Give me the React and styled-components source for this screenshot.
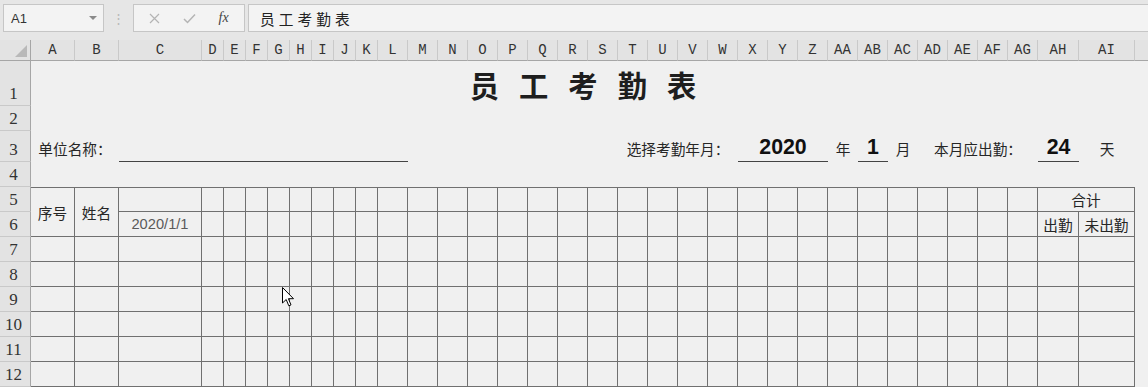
import React from "react"
import styled, { createGlobalStyle, css } from "styled-components"

const GlobalStyle = createGlobalStyle`
  body {
    margin: 0;
    background: #f0f0f0;
    overflow: hidden;
  }
`

const LETTERS_30 = "LMNOPQRSTUVWXYZ".split("").concat(["AA", "AB", "AC", "AD", "AE", "AF", "AG"])

const COLS = [
  ["A", 44], ["B", 44], ["C", 83],
  ...["D", "E", "F", "G", "H", "I", "J", "K"].map(l => [l, 22]),
  ...LETTERS_30.map(l => [l, 30]),
  ["AH", 41], ["AI", 56], ["", 60],
]

const ROWS = [45, 25, 31, 25, 25, 25, 25, 25, 25, 25, 25, 25]

const LINE = "#707070"

const Page = styled.div`
  position: relative;
  width: 1148px;
  height: 387px;
  overflow: hidden;
  font-family: "Liberation Sans", "Noto Sans CJK SC", sans-serif;
`

const Toolbar = styled.div`
  display: flex;
  align-items: flex-start;
  height: 40px;
  box-sizing: border-box;
  padding: 4px 0 0 3px;
  background: #e6e6e6;
`

const NameBox = styled.div`
  display: flex;
  align-items: center;
  justify-content: space-between;
  box-sizing: border-box;
  width: 101px;
  height: 28px;
  padding: 0 6px 0 7px;
  background: #f3f3f3;
  border: 1px solid #c6c6c6;
  font-size: 13px;
  color: #333;
`

const Caret = styled.span`
  width: 0;
  height: 0;
  border-left: 4px solid transparent;
  border-right: 4px solid transparent;
  border-top: 4px solid #8a8a8a;
`

const Dots = styled.div`
  width: 29px;
  height: 28px;
  display: flex;
  align-items: center;
  justify-content: center;
  color: #b8b8b8;
  font-size: 13px;
`

const FxBox = styled.div`
  display: flex;
  align-items: center;
  justify-content: space-around;
  box-sizing: border-box;
  width: 112px;
  height: 28px;
  padding: 0 4px;
  background: #f3f3f3;
  border: 1px solid #c6c6c6;
`

const FxText = styled.span`
  font-family: "Liberation Serif", serif;
  font-style: italic;
  font-size: 14px;
  color: #444;
`

const FormulaInput = styled.div`
  flex: 1;
  display: flex;
  align-items: center;
  box-sizing: border-box;
  height: 28px;
  margin-left: 3px;
  padding-left: 11px;
  background: #f3f3f3;
  border: 1px solid #c6c6c6;
  border-right: none;
  font-size: 14.67px;
  color: #222;
`

const Sheet = styled.div`
  display: grid;
  grid-template-columns: 31px ${COLS.map(c => c[1] + "px").join(" ")};
  grid-template-rows: 21px ${ROWS.map(r => r + "px").join(" ")};
`

const Corner = styled.div`
  grid-column: 1;
  grid-row: 1;
  display: flex;
  align-items: flex-end;
  justify-content: flex-end;
  padding: 0 3px 3px 0;
  background: #e3e3e3;
  border-right: 1px solid #a6a6a6;
  border-bottom: 1px solid #a6a6a6;
`

const ColHead = styled.div`
  grid-column: ${p => p.$c};
  grid-row: 1;
  display: flex;
  align-items: center;
  justify-content: center;
  box-sizing: border-box;
  background: #e3e3e3;
  border-right: 1px solid #c9c9c9;
  border-bottom: 1px solid #a6a6a6;
  font-family: "Liberation Mono", monospace;
  font-size: 14px;
  color: #333;
`

const RowHead = styled.div`
  grid-column: 1;
  grid-row: ${p => p.$r};
  display: flex;
  align-items: flex-end;
  justify-content: center;
  box-sizing: border-box;
  padding: 0 3px 1px 0;
  background: #e3e3e3;
  border-right: 1px solid #a6a6a6;
  border-bottom: 1px solid #c9c9c9;
  font-family: "Liberation Serif", serif;
  font-size: 17px;
  color: #333;
`

const Cell = styled.div`
  grid-column: ${p => p.$c} / span ${p => p.$cs || 1};
  grid-row: ${p => p.$r} / span ${p => p.$rs || 1};
  display: flex;
  align-items: center;
  justify-content: center;
  box-sizing: border-box;
  min-width: 0;
  overflow: hidden;
  white-space: nowrap;
  font-size: 14.67px;
  color: #262626;
  ${p => p.$grid && css`
    border-right: 1px solid ${LINE};
    border-bottom: 1px solid ${LINE};
  `}
  ${p => p.$top && css`border-top: 1px solid ${LINE};`}
  ${p => p.$under && css`border-bottom: 1px solid #444;`}
`

const Label = styled(Cell)`
  align-items: flex-end;
  padding-bottom: 3px;
`

const Value = styled(Cell)`
  align-items: flex-end;
  padding-bottom: 1px;
  font-size: 21.3px;
  font-weight: 700;
  color: #111;
`

const Title = styled(Cell)`
  font-family: "Noto Sans CJK SC", sans-serif;
  font-size: 29.3px;
  font-weight: 700;
  color: #1e1e1e;
  letter-spacing: 6.7px;
  padding-left: 6.7px;
`

const DateText = styled.span`
  color: #5a5a5a;
`

const Pointer = styled.svg`
  position: absolute;
  left: 282px;
  top: 287px;
`

const colOf = letter => COLS.findIndex(c => c[0] === letter) + 2
const rowOf = n => n + 1

const tableCells = () => {
  const out = []
  for (let r = 5; r <= 12; r++) {
    for (let i = 0; i <= 34; i++) {
      if (r === 6 && (i === 0 || i === 1)) continue
      if (r === 5 && i === 34) continue
      let text = null
      let rs = 1
      let cs = 1
      if (r === 5 && i === 0) { text = "序号"; rs = 2 }
      if (r === 5 && i === 1) { text = "姓名"; rs = 2 }
      if (r === 5 && i === 33) { text = "合计"; cs = 2 }
      if (r === 6 && i === 2) text = <DateText>2020/1/1</DateText>
      if (r === 6 && i === 33) text = "出勤"
      if (r === 6 && i === 34) text = "未出勤"
      out.push(
        <Cell key={r + "-" + i} $c={i + 2} $r={rowOf(r)} $rs={rs} $cs={cs} $grid $top={r === 5}>
          {text}
        </Cell>
      )
    }
  }
  return out
}

const App = () => (
  <Page>
    <GlobalStyle />
    <Toolbar>
      <NameBox>
        A1
        <Caret />
      </NameBox>
      <Dots>⋮</Dots>
      <FxBox>
        <svg width="11" height="11" viewBox="0 0 11 11">
          <path d="M1 1 L10 10 M10 1 L1 10" stroke="#b4b4b4" strokeWidth="1.2" fill="none" />
        </svg>
        <svg width="13" height="11" viewBox="0 0 13 11">
          <path d="M1 6 L4.5 9.5 L12 1.5" stroke="#b4b4b4" strokeWidth="1.5" fill="none" />
        </svg>
        <FxText>fx</FxText>
      </FxBox>
      <FormulaInput>员 工 考 勤 表</FormulaInput>
    </Toolbar>

    <Sheet>
      <Corner>
        <svg width="12" height="12" viewBox="0 0 12 12">
          <path d="M12 0 L12 12 L0 12 Z" fill="#b9b9b9" />
        </svg>
      </Corner>
      {COLS.map((c, i) => (
        <ColHead key={i} $c={i + 2}>{c[0]}</ColHead>
      ))}
      {ROWS.map((h, i) => (
        <RowHead key={i} $r={i + 2}>{i + 1}</RowHead>
      ))}

      <Title $c={colOf("A")} $cs={35} $r={rowOf(1)}>员 工 考 勤 表</Title>

      <Label $c={colOf("A")} $cs={2} $r={rowOf(3)}>单位名称：</Label>
      <Cell $c={colOf("C")} $cs={10} $r={rowOf(3)} $under />
      <Label $c={colOf("T")} $cs={4} $r={rowOf(3)}>选择考勤年月：</Label>
      <Value $c={colOf("X")} $cs={3} $r={rowOf(3)} $under>2020</Value>
      <Label $c={colOf("AA")} $r={rowOf(3)}>年</Label>
      <Value $c={colOf("AB")} $r={rowOf(3)} $under>1</Value>
      <Label $c={colOf("AC")} $r={rowOf(3)}>月</Label>
      <Label $c={colOf("AD")} $cs={4} $r={rowOf(3)}>本月应出勤：</Label>
      <Value $c={colOf("AH")} $r={rowOf(3)} $under>24</Value>
      <Label $c={colOf("AI")} $r={rowOf(3)}>天</Label>

      {tableCells()}
    </Sheet>

    <Pointer width="13" height="21" viewBox="0 0 13 21">
      <path d="M0.5 0.5 L0.5 16 L4.2 12.5 L6.8 18.8 L9 17.9 L6.4 11.7 L11.5 11.7 Z" fill="#fff" stroke="#000" strokeWidth="1" />
    </Pointer>
  </Page>
)

export default App
